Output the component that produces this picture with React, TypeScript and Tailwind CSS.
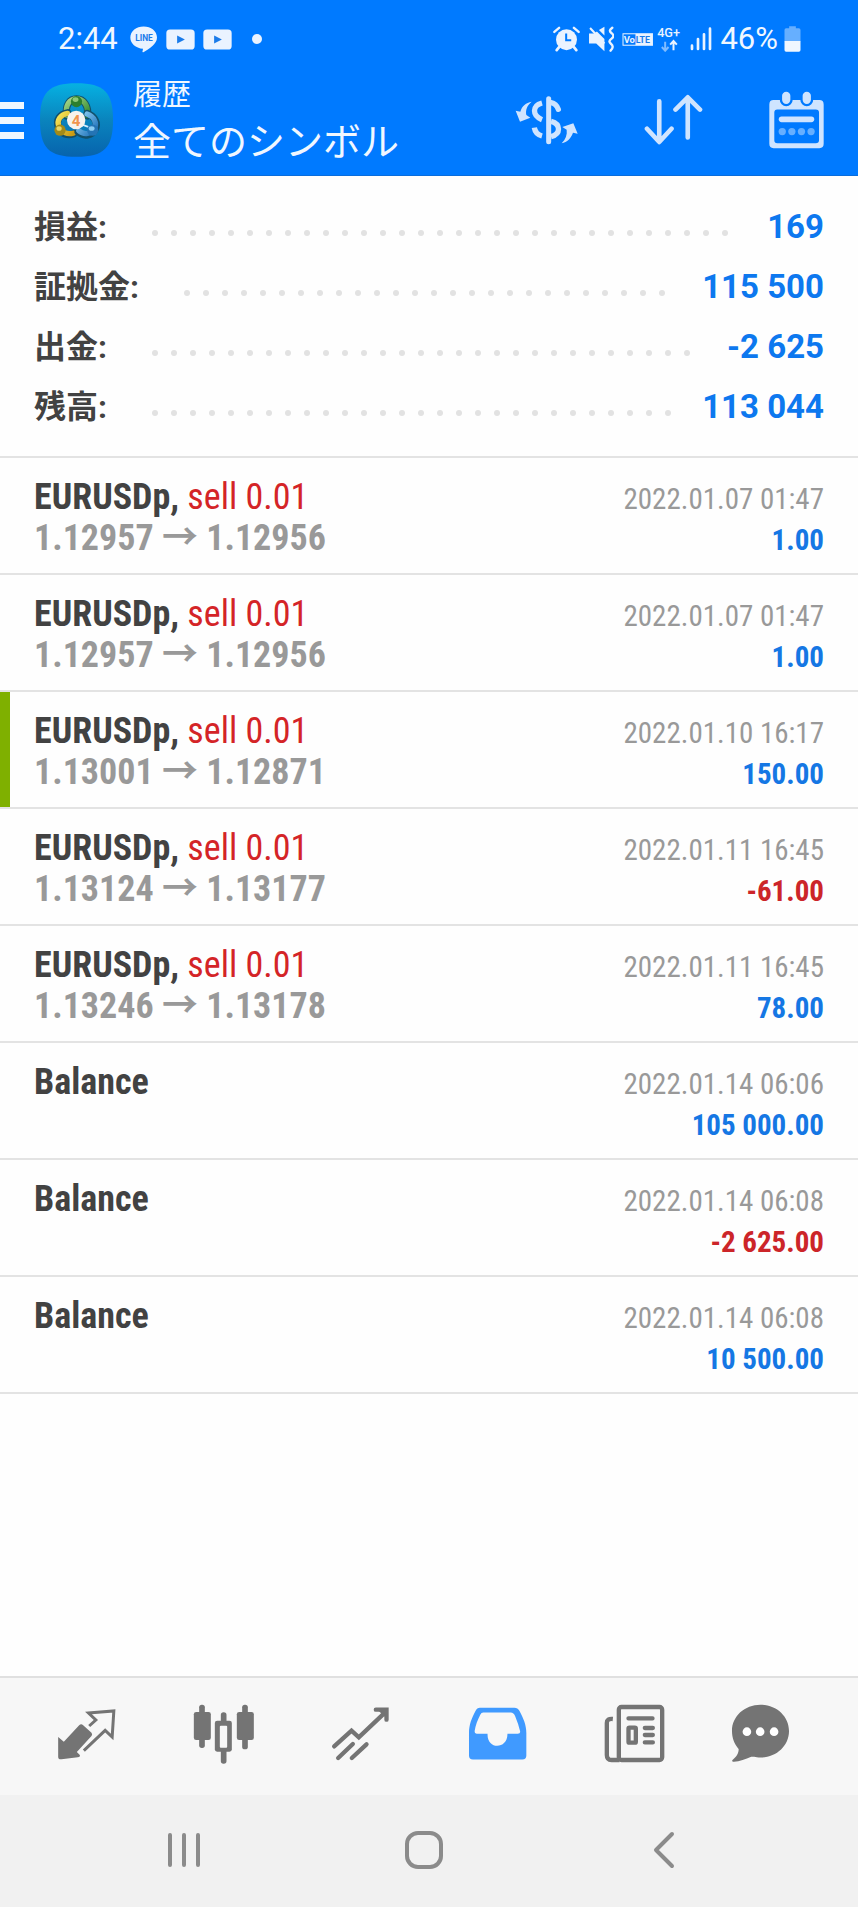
import React from "react";

type Summary = { label: string; value: string };
type Entry = {
  title: string;
  action?: string;
  from?: string;
  to?: string;
  date: string;
  amount: string;
  loss?: boolean;
  marked?: boolean;
};

const summary: Summary[] = [
  { label: "損益:", value: "169" },
  { label: "証拠金:", value: "115 500" },
  { label: "出金:", value: "-2 625" },
  { label: "残高:", value: "113 044" },
];

const entries: Entry[] = [
  { title: "EURUSDp,", action: "sell 0.01", from: "1.12957", to: "1.12956", date: "2022.01.07 01:47", amount: "1.00" },
  { title: "EURUSDp,", action: "sell 0.01", from: "1.12957", to: "1.12956", date: "2022.01.07 01:47", amount: "1.00" },
  { title: "EURUSDp,", action: "sell 0.01", from: "1.13001", to: "1.12871", date: "2022.01.10 16:17", amount: "150.00", marked: true },
  { title: "EURUSDp,", action: "sell 0.01", from: "1.13124", to: "1.13177", date: "2022.01.11 16:45", amount: "-61.00", loss: true },
  { title: "EURUSDp,", action: "sell 0.01", from: "1.13246", to: "1.13178", date: "2022.01.11 16:45", amount: "78.00" },
  { title: "Balance", date: "2022.01.14 06:06", amount: "105 000.00" },
  { title: "Balance", date: "2022.01.14 06:08", amount: "-2 625.00", loss: true },
  { title: "Balance", date: "2022.01.14 06:08", amount: "10 500.00" },
];

function LineIcon() {
  return (
    <svg viewBox="390 75 84 80" className="h-[27px] w-7" aria-hidden="true">
      <path d="M431 76c22 0 40 14 40 33 0 10-6 18-13 25-9 8-20 15-28 19-3 1-3-1-2-4l1-6c-22-2-38-16-38-34 0-19 18-33 40-33Z" fill="#eaf3ff" />
      <text x="432" y="119" textAnchor="middle" fontSize="25" fontWeight="700" fontFamily="Roboto, sans-serif" fill="#1a7bea">LINE</text>
    </svg>
  );
}

function VideoIcon() {
  return (
    <svg viewBox="0 0 86 62" className="h-[21px] w-[29px]" aria-hidden="true">
      <rect x="1" y="1" width="84" height="60" rx="11" fill="#eaf3ff" />
      <path d="M33 19v24l23-12Z" fill="#1a7bea" />
    </svg>
  );
}

function AlarmIcon() {
  return (
    <svg viewBox="372 76 80 76" className="h-[26px] w-[27px]" aria-hidden="true" fill="none" stroke="#eaf3ff" strokeLinecap="round">
      <circle cx="412" cy="116" r="31" fill="#eaf3ff" stroke="none" />
      <path d="M376 93l14-12M448 93l-14-12" strokeWidth="7" />
      <path d="M390 138l-7 9M434 138l7 9" strokeWidth="8" />
      <path d="M411 98v20h15" stroke="#007aff" strokeWidth="6" strokeLinecap="butt" />
    </svg>
  );
}

function MuteIcon() {
  return (
    <svg viewBox="480 76 76 76" className="h-[26px] w-[26px]" aria-hidden="true">
      <path d="M483 98h15l8-6 22 22v36l-24-23h-21Z" fill="#eaf3ff" />
      <path d="M512 88l16-10v26Z" fill="#eaf3ff" />
      <path d="M486 82l42 45" stroke="#eaf3ff" strokeWidth="6" />
      <path d="M551 81c-9 7-9 11-2 16 7 6 7 10 0 16-8 6-8 10-2 15 7 6 7 12-1 20" fill="none" stroke="#eaf3ff" strokeWidth="7" strokeLinecap="round" />
    </svg>
  );
}

function VolteIcon() {
  return (
    <svg viewBox="578 96 92 38" className="h-[13px] w-[31px]" aria-hidden="true">
      <rect x="581" y="98" width="88" height="34" fill="none" stroke="#eaf3ff" strokeWidth="3" />
      <rect x="618" y="98" width="51" height="34" fill="#eaf3ff" />
      <text x="583" y="125" fontSize="28" fontWeight="700" fontFamily="Roboto, sans-serif" fill="#eaf3ff">Vo</text>
      <text x="619" y="125" fontSize="26" fontWeight="700" fontFamily="Roboto, sans-serif" fill="#1a7bea">LTE</text>
    </svg>
  );
}

function NetworkIcon() {
  return (
    <svg viewBox="683 80 74 78" className="h-[26px] w-[25px]" aria-hidden="true" fill="none">
      <text x="683" y="112" fontSize="38" fontWeight="500" fontFamily="Roboto, sans-serif" fill="#eaf3ff">4G+</text>
      <path d="M707 127v26M697 143l10 11 10-11" stroke="#80bcff" strokeWidth="6" />
      <path d="M732 153v-26M722 136l10-11 10 11" stroke="#eaf3ff" strokeWidth="6" />
    </svg>
  );
}

function SignalIcon() {
  return (
    <svg viewBox="778 82 66 72" className="h-6 w-[22px]" aria-hidden="true" stroke="#eaf3ff" strokeWidth="8" strokeLinecap="round">
      <path d="M784 138v10M802 118v30M820 104v44M838 87v61" />
    </svg>
  );
}

function BatteryIcon() {
  return (
    <svg viewBox="1061 76 50 78" className="h-[26px] w-[17px]" aria-hidden="true">
      <path d="M1076 77h20v6h9q5 0 5 5v34h-48V88q0-5 5-5h9Z" fill="#66afff" />
      <path d="M1062 121h48v27q0 5-5 5h-38q-5 0-5-5Z" fill="#f0f7ff" />
    </svg>
  );
}

function AppLogo() {
  return (
    <svg viewBox="119 245 222 224" className="h-[74px] w-[73px]" aria-hidden="true">
      <defs>
        <linearGradient id="tile" x1="0" y1="0" x2="0" y2="1">
          <stop offset="0" stopColor="#06b1e2" />
          <stop offset="0.5" stopColor="#0a84bd" />
          <stop offset="1" stopColor="#0763ad" />
        </linearGradient>
        <linearGradient id="green" x1="0" y1="0" x2="1" y2="1">
          <stop offset="0" stopColor="#a9d68b" />
          <stop offset="1" stopColor="#2f8a2c" />
        </linearGradient>
        <linearGradient id="yellow" x1="0" y1="0" x2="1" y2="1">
          <stop offset="0" stopColor="#f6e659" />
          <stop offset="1" stopColor="#c99a13" />
        </linearGradient>
        <linearGradient id="blue" x1="0" y1="0" x2="1" y2="1">
          <stop offset="0" stopColor="#8fd0f5" />
          <stop offset="1" stopColor="#1c6fb8" />
        </linearGradient>
      </defs>
      <path d="M230 245C314 245 341 272 341 357S314 469 230 469 119 442 119 357 146 245 230 245Z" fill="url(#tile)" />
      <g fill="none" strokeLinecap="round">
        <path d="M200 345c-5-32 8-52 30-52s38 22 33 52" stroke="#12506b" strokeWidth="22" />
        <path d="M200 343c-5-30 8-50 30-50s37 20 33 50" stroke="url(#green)" strokeWidth="16" />
        <path d="M203 335c-24 4-36 22-28 44 7 20 28 27 46 20" stroke="#12506b" strokeWidth="22" />
        <path d="M203 337c-22 4-34 20-27 40 7 18 27 25 44 20" stroke="url(#yellow)" strokeWidth="16" />
        <path d="M262 337c24 8 34 30 25 48-9 19-34 24-52 8" stroke="#12506b" strokeWidth="22" />
        <path d="M262 339c22 8 31 27 23 44-9 17-32 21-48 7" stroke="url(#blue)" strokeWidth="16" />
        <path d="M247 371c14 4 25 9 37 17" stroke="#d8efff" strokeWidth="6" />
      </g>
      <circle cx="230" cy="301" r="17" fill="#2c7f2d" />
      <ellipse cx="227" cy="295" rx="9" ry="7" fill="#8cc878" />
      <circle cx="180" cy="388" r="17" fill="#a38a17" />
      <ellipse cx="177" cy="383" rx="8" ry="7" fill="#e6d768" />
      <circle cx="279" cy="388" r="17" fill="#2474b5" />
      <ellipse cx="276" cy="383" rx="9" ry="7" fill="#8ccdf2" />
      <circle cx="229" cy="357" r="28" fill="#f6f3ee" />
      <text x="229" y="374" textAnchor="middle" fontSize="46" fontWeight="700" fontFamily="Roboto, sans-serif" fill="#f0954e">4</text>
    </svg>
  );
}

function ExchangeIcon() {
  return (
    <svg viewBox="260 278 189 150" className="h-[50px] w-[63px]" aria-hidden="true">
      <g fill="none" stroke="#cfe4ff">
        <path d="M361 289v129" strokeWidth="15" strokeLinecap="round" />
        <path d="M341 302c-30 8-30 38 0 50" strokeWidth="16" />
        <path d="M341 401c-11-3-21-12-23-25" strokeWidth="16" />
        <path d="M368 301c10 2 18 9 22 20" strokeWidth="16" strokeLinecap="round" />
        <path d="M368 357c30 8 30 38 0 46" strokeWidth="16" />
      </g>
      <path d="M310 298c-17 3-29 12-34 30l-14-3 13 33 31-12-12-8c-3-15 2-29 16-40Z" fill="#cfe4ff" />
      <path d="M400 423c17-4 28-15 34-32l14 3-13-31-33 11 13 8c2 15-3 29-15 41Z" fill="#cfe4ff" />
    </svg>
  );
}

function SortIcon() {
  return (
    <svg viewBox="637 280 178 155" className="h-[52px] w-[59px]" aria-hidden="true" fill="none" stroke="#cfe4ff" strokeWidth="14" strokeLinecap="round" strokeLinejoin="round">
      <path d="M683 301v122M646 384l37 40 37-40M769 410V290M732 326l37-37 37 37" />
    </svg>
  );
}

function CalendarIcon() {
  return (
    <svg viewBox="1015 268 166 174" className="h-[58px] w-[55px]" aria-hidden="true">
      <path fillRule="evenodd" d="M1029 295h138q13 0 13 13v119q0 13-13 13h-138q-13 0-13-13V308q0-13 13-13ZM1040 323q-9 0-9 9v83q0 10 9 10h116q10 0 10-10v-83q0-9-10-9Z" fill="#cfe4ff" />
      <g fill="#cfe4ff" stroke="#007aff" strokeWidth="7">
        <rect x="1051" y="266" width="32" height="44" rx="16" />
        <rect x="1113" y="266" width="32" height="44" rx="16" />
      </g>
      <path d="M1053 353h90" stroke="#cfe4ff" strokeWidth="17" strokeLinecap="round" />
      <g fill="#66afff">
        <circle cx="1055" cy="390" r="11" />
        <circle cx="1084" cy="390" r="11" />
        <circle cx="1113" cy="390" r="11" />
        <circle cx="1142" cy="390" r="11" />
      </g>
    </svg>
  );
}

function QuotesIcon() {
  return (
    <svg viewBox="174 130 176 180" className="h-[60px] w-[59px]" aria-hidden="true">
      <path d="M177 229l17 14 46-49q6-6 12 0l25 22q4 5 0 10l-44 48 9 9q2 6-6 7l-49 6q-10 1-10-8Z" fill="#747474" />
      <path d="M270 196l20-18-22-21 76-6-5 78-21-20-64 61" fill="none" stroke="#747474" strokeWidth="9" />
    </svg>
  );
}

function CandlesIcon() {
  return (
    <svg viewBox="580 130 182 180" className="h-[60px] w-[61px]" aria-hidden="true" fill="#747474">
      <rect x="598" y="132" width="17" height="130" rx="8" />
      <rect x="582" y="154" width="51" height="84" rx="7" />
      <rect x="727" y="132" width="17" height="134" rx="8" />
      <rect x="711" y="154" width="51" height="84" rx="7" />
      <rect x="663" y="155" width="17" height="154" rx="8" />
      <rect x="645" y="180" width="51" height="93" rx="7" />
      <rect x="660" y="195" width="22" height="66" rx="3" fill="#f7f7f7" />
    </svg>
  );
}

function TrendIcon() {
  return (
    <svg viewBox="994 130 176 180" className="h-[60px] w-[59px]" aria-hidden="true" fill="none" stroke="#747474" strokeWidth="13">
      <path d="M1003 257l52-47 22 20 79-75" strokeLinecap="round" />
      <path d="M1128 147h32v30" strokeLinecap="round" />
      <path d="M1137 147h23v22Z" fill="#747474" strokeWidth="6" />
      <path d="M1015 292l44-42M1056 292l44-41" strokeLinecap="round" />
    </svg>
  );
}

function InboxIcon() {
  return (
    <svg viewBox="114 130 178 180" className="h-[60px] w-[59px]" aria-hidden="true">
      <path fillRule="evenodd" d="M150 141h104q10 0 15 9c12 22 21 43 21 67v68q0 12-12 12H129q-12 0-12-12v-68c0-24 8-45 20-67q4-9 13-9ZM160 155q-6 0-9 7c-8 16-14 31-17 49q0 8 7 8h32c-2 50 61 48 60 0h31q9 0 7-8-5-21-15-45-4-11-13-11Z" fill="#409aff" />
    </svg>
  );
}

function NewsIcon() {
  return (
    <svg viewBox="526 130 182 180" className="h-[60px] w-[61px]" aria-hidden="true" fill="none" stroke="#747474">
      <rect x="570" y="139" width="130" height="159" rx="8" strokeWidth="13" />
      <path d="M552 175q-18-2-18 12v96q0 15 14 15h24" strokeWidth="13" />
      <path d="M599 173h72M648 202h24M648 223h24M648 245h24" strokeWidth="13" strokeLinecap="round" />
      <rect x="599" y="201" width="22" height="45" rx="3" strokeWidth="13" />
    </svg>
  );
}

function ChatIcon() {
  return (
    <svg viewBox="905 130 178 180" className="h-[60px] w-[59px]" aria-hidden="true">
      <path d="M994 132c48 0 86 35 86 79 0 47-42 83-92 80-8-1-14-3-22-2-17 7-35 14-52 15-7 0-7-5-2-8 9-6 17-19 16-31-13-14-20-33-20-54 0-44 38-79 86-79Z" fill="#747474" />
      <g fill="#fff">
        <circle cx="953" cy="213" r="13" />
        <circle cx="993" cy="213" r="13" />
        <circle cx="1035" cy="213" r="13" />
      </g>
    </svg>
  );
}

const tabs = [
  { name: "Quotes", Icon: QuotesIcon },
  { name: "Charts", Icon: CandlesIcon },
  { name: "Trade", Icon: TrendIcon },
  { name: "History", Icon: InboxIcon },
  { name: "News", Icon: NewsIcon },
];

function Leader() {
  return (
    <div aria-hidden="true" className="mt-3 mr-[22px] ml-[38px] flex h-[6px] flex-1 flex-wrap overflow-hidden">
      {Array.from({ length: 60 }, (_, i) => (
        <span key={i} className="flex h-[6px] w-[19px] justify-center">
          <span className="size-[6px] rounded-full bg-[#e2e2e2]" />
        </span>
      ))}
    </div>
  );
}

export default function App() {
  return (
    <div className="flex min-h-screen flex-col bg-[#fefefe] font-[Roboto,'Noto_Sans_CJK_JP',sans-serif]">
      <header className="border-b border-[#0a6ddb] bg-[#007aff] pb-[11px] text-[#f0f7ff]">
        <div className="flex h-[76px] items-center justify-between pt-[2px] pr-[57px] pl-[58px]">
          <div className="flex items-center">
            <span className="text-[31px] leading-10">2:44</span>
            <div className="ml-3 flex items-center gap-2">
              <LineIcon />
              <VideoIcon />
              <VideoIcon />
            </div>
            <span className="ml-5 size-[10px] rounded-full bg-[#eaf3ff]" />
          </div>
          <div className="flex items-center gap-2">
            <AlarmIcon />
            <MuteIcon />
            <div className="flex items-center gap-1">
              <VolteIcon />
              <NetworkIcon />
            </div>
            <SignalIcon />
            <span className="flex items-center gap-[6px] text-[31px] leading-10">
              46%
              <BatteryIcon />
            </span>
          </div>
        </div>
        <div className="flex h-[88px] items-center pr-[34px]">
          <button type="button" aria-label="Menu" className="flex w-6 flex-col gap-2">
            <span className="h-[7px] w-full bg-[#f0f7ff]" />
            <span className="h-[7px] w-full bg-[#f0f7ff]" />
            <span className="h-[7px] w-full bg-[#f0f7ff]" />
          </button>
          <div className="ml-4">
            <AppLogo />
          </div>
          <div className="ml-5 flex-1">
            <p className="text-[29px] leading-[44px]">履歴</p>
            <h1 className="text-[38px] leading-[50px]">全てのシンボル</h1>
          </div>
          <div className="flex items-center gap-[66px]">
            <button type="button" aria-label="Currency"><ExchangeIcon /></button>
            <button type="button" aria-label="Sort"><SortIcon /></button>
            <button type="button" aria-label="Calendar"><CalendarIcon /></button>
          </div>
        </div>
      </header>

      <dl className="border-b-2 border-[#e3e3e3] px-[34px] pt-[21px] pb-[19px]">
        {summary.map((row) => (
          <div key={row.label} className="flex h-[60px] items-center font-bold">
            <dt className="text-[32px] leading-10 text-[#424242]">{row.label}</dt>
            <Leader />
            <dd className="text-[33px] leading-10 text-[#0d78ef]">{row.value}</dd>
          </div>
        ))}
      </dl>

      <ul className="flex-1 font-['Roboto_Condensed',Roboto,'Noto_Sans_CJK_JP',sans-serif]">
        {entries.map((e, i) => (
          <li
            key={i}
            className={
              e.marked
                ? "flex h-[117px] border-b-2 border-[#e3e3e3] bg-[linear-gradient(#7fb000,#7fb000)] bg-[length:10px_100%] bg-no-repeat px-[34px] pt-[19px]"
                : "flex h-[117px] border-b-2 border-[#e3e3e3] px-[34px] pt-[19px]"
            }
          >
            <div className="flex-1 text-[36px] leading-[41px] font-bold">
              <p className="text-[#424242]">
                {e.title}
                {e.action && <span className="font-normal text-[#d42427]"> {e.action}</span>}
              </p>
              {e.from && (
                <p className="text-[#999999]">
                  {e.from} → {e.to}
                </p>
              )}
            </div>
            <div className="pt-[2px] text-right text-[29px] leading-[41px]">
              <p className="text-[#999999]">{e.date}</p>
              <p className={e.loss ? "font-bold text-[#cc2529]" : "font-bold text-[#1577e4]"}>{e.amount}</p>
            </div>
          </li>
        ))}
      </ul>

      <nav aria-label="Sections" className="grid h-[119px] grid-cols-6 border-t-2 border-[#e0e0e0] bg-[#f7f7f7] px-[18px] pb-[6px]">
        {tabs.map(({ name, Icon }) => (
          <button key={name} type="button" aria-label={name} className="flex items-center justify-center">
            <Icon />
          </button>
        ))}
        <button type="button" aria-label="Chat" className="flex items-center justify-center pr-[22px]">
          <ChatIcon />
        </button>
      </nav>

      <nav aria-label="System" className="grid h-28 grid-cols-3 items-center justify-items-center bg-[#f1f1f1] pr-[74px] pb-[2px] pl-16">
        <button type="button" aria-label="Recents">
          <svg viewBox="0 0 36 36" className="size-9" stroke="#8b8b8b" strokeWidth="4" strokeLinecap="round">
            <path d="M4 3v30M18 3v30M32 3v30" />
          </svg>
        </button>
        <button type="button" aria-label="Home">
          <svg viewBox="0 0 40 40" className="size-10" fill="none" stroke="#8b8b8b" strokeWidth="4">
            <rect x="3" y="3" width="34" height="34" rx="11" />
          </svg>
        </button>
        <button type="button" aria-label="Back">
          <svg viewBox="0 0 22 38" className="h-[38px] w-[22px]" fill="none" stroke="#8b8b8b" strokeWidth="4" strokeLinecap="round" strokeLinejoin="round">
            <path d="M19 3L3 19l16 16" />
          </svg>
        </button>
      </nav>
    </div>
  );
}
